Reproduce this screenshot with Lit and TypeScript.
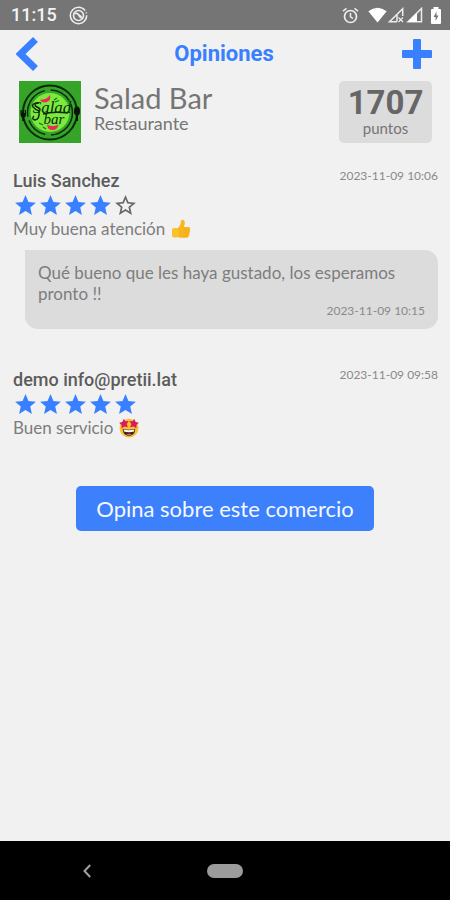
import { LitElement, html, css, svg } from "lit";
import { customElement, property } from "lit/decorators.js";

interface Review {
  author: string;
  date: string;
  stars: number;
  text: string;
  emoji: "thumb" | "starry";
  reply?: { text: string; date: string };
}

const REVIEWS: Review[] = [
  {
    author: "Luis Sanchez",
    date: "2023-11-09 10:06",
    stars: 4,
    text: "Muy buena atención",
    emoji: "thumb",
    reply: {
      text: "Qué bueno que les haya gustado, los esperamos pronto !!",
      date: "2023-11-09 10:15",
    },
  },
  {
    author: "demo info@pretii.lat",
    date: "2023-11-09 09:58",
    stars: 5,
    text: "Buen servicio",
    emoji: "starry",
  },
];

const STAR =
  "M12 17.27L18.18 21l-1.64-7.03L22 9.24l-7.19-.61L12 2 9.19 8.63 2 9.24l5.46 4.73L5.82 21z";
const STAR_OUTLINE =
  "M22 9.24l-7.19-.62L12 2 9.19 8.63 2 9.24l5.46 4.73L5.82 21 12 17.27 18.18 21l-1.63-7.03L22 9.24zM12 15.4l-3.76 2.27 1-4.28-3.32-2.88 4.38-.38L12 6.1l1.71 4.04 4.38.38-3.32 2.88 1 4.28L12 15.4z";

const thumb = html`<svg class="emoji" viewBox="0 0 20 20" role="img" aria-label="Pulgar arriba">
  <path fill="#f9b61c" d="M6.500 9.200C8.500 7.500 9.800 5.300 9.900 2.900C9.950 1.400 10.600.7 11.600.8C13.400 1 14.200 2.800 13.700 5L12.900 8H17.200C19.400 8 19.700 10.300 18.400 11C19.600 11.800 19.300 13.400 18.100 13.800C18.900 14.700 18.500 16 17.400 16.400C17.900 17.700 17.100 18.700 15.600 18.800H11C8.500 18.800 7.500 18.200 6.500 17.700Z"/>
  <rect x="1" y="9" width="6.500" height="9.600" rx="2" fill="#fbc02d"/>
  <path d="M13 11H18M13 13.800H17.800M12.800 16.400H17.200" stroke="#eea616" stroke-width=".7" fill="none" stroke-linecap="round"/>
</svg>`;

const starry = html`<svg class="emoji" viewBox="0 0 20 20" role="img" aria-label="Cara con estrellas">
  <circle cx="10" cy="10.200" r="9.400" fill="#fbc02d"/>
  <path d="M3.800 10.800Q10 12.600 16.200 10.800C16.200 15.500 13.500 17.800 10 17.800S3.800 15.500 3.800 10.800Z" fill="#3c2523"/>
  <path d="M4.600 11.400Q10 12.900 15.400 11.400L15 13.600Q10 14.900 5 13.600Z" fill="#fff"/>
  <path d="M7 16.600Q10 14.800 13 16.600Q10 18 7 16.600Z" fill="#ed6a5a"/>
  <path fill="#d81b60" d="M4.800.8L6.300 3.300L9.700 3.100L7.700 5.900L8.900 9.200L5.600 8.400L2.600 10.300L2.600 6.900L.1 4.800L3.400 4ZM15.200.8L13.700 3.300L10.300 3.100L12.300 5.900L11.100 9.200L14.400 8.400L17.400 10.300L17.400 6.900L19.900 4.800L16.600 4Z"/>
</svg>`;

const logo = svg`
  <rect width="62" height="62" fill="#35a428"/>
  <circle cx="31" cy="31.500" r="27" fill="none" stroke="#0b2a0c" stroke-width="2"/>
  <circle cx="31" cy="31.500" r="22.500" fill="none" stroke="#0b2a0c" stroke-width="1.500" stroke-dasharray="34 6 22 4"/>
  <circle cx="31" cy="31.500" r="19.500" fill="#7bea3c"/>
  <path d="M1.500 29V33Q1.500 36.500 4.300 36.500T7 33V29H5.800V32H4.800V29H3.800V32H2.800V29Z" fill="#071508"/>
  <path d="M4.200 35V40" stroke="#071508" stroke-width="2"/>
  <ellipse cx="58" cy="30" rx="3" ry="4.500" fill="#071508"/>
  <path d="M58 33V40" stroke="#071508" stroke-width="2"/>
  <path d="M21 18.500Q27 19.500 31 14Q32.500 20 27 21.200Q22.500 22 21 18.500Z" fill="#ee2857"/>
  <path d="M28 43.500Q33.500 47 39.500 43.500Q38.500 49 33.500 49T28 43.500Z" fill="#ee2857"/>
  <path d="M35 19L38 17M36 21L40 19.500M20 42L24 44M24 46L27 48" stroke="#1c6f17" stroke-width="1.200"/>
  <text class="mark" x="33" y="32" text-anchor="middle" font-size="17">Salad</text>
  <text class="mark" x="35" y="43" text-anchor="middle" font-size="15">bar</text>
  <path d="M20 22Q12 22 14 26Q17 29 20 30Q21 38 16 39Q12 38 15 35M24 33Q34 30 49 32" stroke="#0b2a0c" stroke-width="1.400" fill="none"/>`;

@customElement("review-item")
export class ReviewItem extends LitElement {
  @property({ attribute: false }) review!: Review;

  static styles = css`
    :host { display: block; color: #7d7d7d; font-family: Lato, sans-serif; }
    .head { display: flex; justify-content: space-between; height: 23px; }
    .author { margin: 0; font: 500 18px/22px Roboto, sans-serif; color: #5c5c5c; }
    .date { font-size: 12px; line-height: 12px; color: #8a8a8a; }
    .stars { display: flex; height: 25px; }
    .star { width: 25px; height: 25px; fill: #3880ff; }
    .star.empty { fill: #666; }
    .comment { display: flex; align-items: center; gap: 6px; margin: 0; font-size: 17px; line-height: 21px; }
    .emoji { width: 20px; height: 20px; }
    .reply {
      margin: 11px 0 0 12px; padding: 12px 13px; display: flex; flex-direction: column;
      background: #dcdcdc; border-radius: 0 13px 13px 13px;
    }
    .reply-text { margin: 0; font-size: 17px; line-height: 21px; }
    .reply .date { align-self: flex-end; line-height: 13px; }
  `;

  render() {
    const r = this.review;
    return html`<article>
      <div class="head">
        <h3 class="author">${r.author}</h3>
        <time class="date">${r.date}</time>
      </div>
      <div class="stars" role="img" aria-label="${r.stars} de 5">
        ${[1, 2, 3, 4, 5].map(
          (n) => html`<svg class="star ${n > r.stars ? "empty" : ""}" viewBox="0 0 24 24">
            <path d=${n > r.stars ? STAR_OUTLINE : STAR} />
          </svg>`
        )}
      </div>
      <p class="comment"><span>${r.text}</span>${r.emoji === "thumb" ? thumb : starry}</p>
      ${r.reply
        ? html`<div class="reply">
            <p class="reply-text">${r.reply.text}</p>
            <time class="date">${r.reply.date}</time>
          </div>`
        : ""}
    </article>`;
  }
}

@customElement("app-root")
export class AppRoot extends LitElement {
  static styles = css`
    :host {
      display: flex; flex-direction: column; min-height: 100vh;
      background: #f1f1f1; color: #757575; font-family: Lato, sans-serif;
    }
    button { border: 0; padding: 0; background: none; font-family: inherit; cursor: pointer; }
    svg { display: block; }
    .status {
      display: flex; align-items: center; height: 30px; padding: 0 8px 0 11px; box-sizing: border-box;
      background: #757575; color: #f4f4f4; font: 500 18px/32px Roboto, sans-serif;
    }
    .notice { margin-left: 12px; }
    .system { display: flex; align-items: center; margin-left: auto; }
    .alarm { margin-right: 9px; }
    .battery { margin-left: 7px; }
    .bar {
      display: grid; grid-template-columns: 1fr auto 1fr; align-items: center;
      height: 48px; padding: 0 18px 0 16px; color: #3880ff;
    }
    .title { margin: 0; font: 700 22px/28px Roboto, sans-serif; }
    .add { justify-self: end; }
    .back { justify-self: start; }
    .shop { display: flex; align-items: flex-start; padding: 3px 18px 0 19px; }
    .logo { width: 62px; height: 62px; }
    .mark { font-family: "Liberation Serif", serif; font-style: italic; fill: #0b2a0c; }
    .who { flex: 1; margin-left: 13px; }
    .name { margin: 0; font-size: 29px; line-height: 33px; font-weight: 400; }
    .kind { margin: 0; font-size: 18px; line-height: 18px; }
    .points {
      display: flex; flex-direction: column; align-items: center; width: 93px; height: 62px;
      padding-top: 4px; box-sizing: border-box; border-radius: 5px; background: #dcdcdc;
    }
    .total { font: 700 33px/36px Roboto, sans-serif; color: #666; }
    .unit { font-size: 15px; line-height: 15px; }
    .list { display: flex; flex-direction: column; gap: 40px; padding: 27px 12px 0 13px; }
    .main { flex: 1; display: flex; flex-direction: column; }
    .cta {
      align-self: center; margin-top: 48px; height: 45px; padding: 0 20px; border-radius: 5px;
      background: #3d80fb; color: #f4f8ff; font-size: 22px; line-height: 45px;
    }
    .nav {
      display: grid; grid-template-columns: 1fr auto 1fr; align-items: center;
      height: 59px; background: #000;
    }
    .nav-back { justify-self: center; padding-right: 34px; }
    .home { width: 36px; height: 14px; border-radius: 7px; background: #9b9b9b; }
  `;

  render() {
    return html`
      <div class="status">
        <span>11:15</span>
        <svg class="notice" width="19" height="19" viewBox="0 0 19 19" fill="none" stroke="#eee">
          <circle cx="9.500" cy="9.500" r="8.200" stroke-width="1.600" stroke-dasharray="46 2 1 2"/>
          <circle cx="9.500" cy="9.500" r="5" stroke-width="1.600"/>
          <path d="M5.500 8Q8 6 9.500 9T13.500 12.500M8 7.500L12.500 11" stroke-width="1.600"/>
        </svg>
        <div class="system">
          <svg class="alarm" width="17" height="17" viewBox="0 0 17 17" fill="none" stroke="#eee">
            <circle cx="8.500" cy="9.500" r="6" stroke-width="1.700"/>
            <path d="M8.500 6V9.800L11 11.500M1 4.200L4.500 1.400M16 4.200L12.500 1.400" stroke-width="1.500"/>
          </svg>
          <svg width="19" height="16" viewBox="0 0 19 16"><path d="M.3 4.200Q9.500-2.800 18.700 4.200L9.500 15.500Z" fill="#fff"/></svg>
          <svg width="19" height="16" viewBox="0 0 19 16" fill="none" stroke="#eee" stroke-width="1.500">
            <path d="M15.700 9V1.800L2.500 14.800H10"/><path d="M10 8V14.500" /><path d="M11.500 10.500L16 15M16 10.500L11.500 15" stroke-width="1.200"/>
          </svg>
          <svg width="17" height="16" viewBox="0 0 17 16">
            <path d="M2 14.800L15.500 1.500V14.800Z" fill="none" stroke="#eee" stroke-width="1.500"/><path d="M2 15L11 6V15Z" fill="#fff"/>
          </svg>
          <svg class="battery" width="12" height="17" viewBox="0 0 12 17">
            <path d="M3.500 0H8.500V2H10Q11 2 11 3V16Q11 17 10 17H2Q1 17 1 16V3Q1 2 2 2H3.500Z" fill="#fff"/>
            <path d="M6.500 4.500L3.600 10H5.600V14L8.500 8.500H6.500Z" fill="#757575"/>
          </svg>
        </div>
      </div>
      <header class="bar">
        <button class="back" aria-label="Volver">
          <svg width="24" height="34" viewBox="0 0 24 34"><path d="M19.500 2.500L4.500 17L19.500 31.500" fill="none" stroke="#3880ff" stroke-width="7"/></svg>
        </button>
        <h1 class="title">Opiniones</h1>
        <button class="add" aria-label="Agregar">
          <svg width="30" height="30" viewBox="0 0 30 30" fill="#3880ff"><rect x="11" width="8" height="30" rx="1"/><rect y="11" width="30" height="8" rx="1"/></svg>
        </button>
      </header>
      <main class="main">
        <section class="shop">
          <svg class="logo" viewBox="0 0 62 62" role="img" aria-label="Logo de Salad Bar">${logo}</svg>
          <div class="who">
            <h2 class="name">Salad Bar</h2>
            <p class="kind">Restaurante</p>
          </div>
          <div class="points"><span class="total">1707</span><span class="unit">puntos</span></div>
        </section>
        <section class="list">
          ${REVIEWS.map((r) => html`<review-item .review=${r}></review-item>`)}
        </section>
        <button class="cta">Opina sobre este comercio</button>
      </main>
      <nav class="nav">
        <button class="nav-back" aria-label="Atrás">
          <svg width="10" height="14" viewBox="0 0 10 14"><path d="M8.200 1L2.500 7L8.200 13" fill="none" stroke="#a0a0a0" stroke-width="2"/></svg>
        </button>
        <button class="home" aria-label="Inicio"></button>
      </nav>
    `;
  }
}
